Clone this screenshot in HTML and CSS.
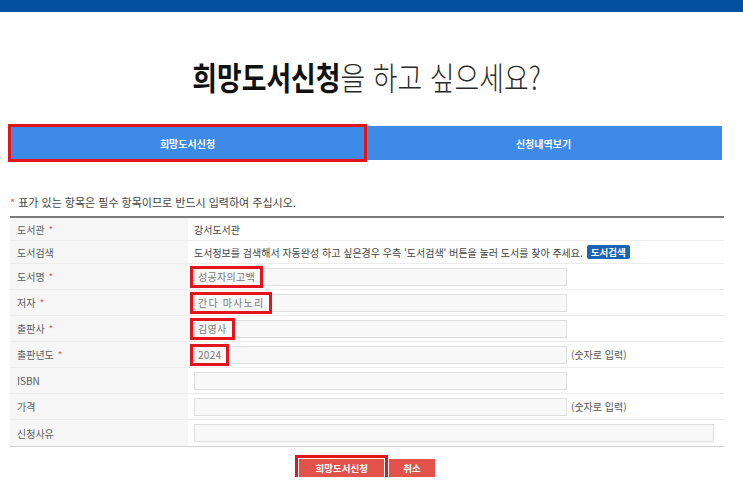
FILE: index.html
```html
<!DOCTYPE html>
<html lang="ko">
<head>
<meta charset="utf-8">
<title>희망도서신청</title>
<link rel="stylesheet" href="styles.css">
</head>
<body>
<div class="topbar"></div>
<div class="wrap">
  <h1 class="title"><span class="title-inner"><b>희망도서신청</b>을 하고 싶으세요?</span></h1>
  <div class="tabs">
    <div class="tab tab-active">희망도서신청</div>
    <div class="tab">신청내역보기</div>
  </div>
  <p class="note"><span class="req">*</span> 표가 있는 항목은 필수 항목이므로 반드시 입력하여 주십시오.</p>
  <div class="form">
    <div class="row row-short">
      <div class="label">도서관 <span class="req">*</span></div>
      <div class="value">강서도서관</div>
    </div>
    <div class="row row-short">
      <div class="label">도서검색</div>
      <div class="value">도서정보를 검색해서 자동완성 하고 싶은경우 우측 '도서검색' 버튼을 눌러 도서를 찾아 주세요. <span class="search-btn">도서검색</span></div>
    </div>
    <div class="row">
      <div class="label">도서명 <span class="req">*</span></div>
      <div class="value"><div class="input"><span class="mark">성공자의고백</span></div></div>
    </div>
    <div class="row">
      <div class="label">저자 <span class="req">*</span></div>
      <div class="value"><div class="input"><span class="mark mark-wide">간다 마사노리</span></div></div>
    </div>
    <div class="row">
      <div class="label">출판사 <span class="req">*</span></div>
      <div class="value"><div class="input"><span class="mark">김영사</span></div></div>
    </div>
    <div class="row">
      <div class="label">출판년도 <span class="req">*</span></div>
      <div class="value"><div class="input"><span class="mark">2024</span></div><span class="hint">(숫자로 입력)</span></div>
    </div>
    <div class="row">
      <div class="label">ISBN</div>
      <div class="value"><div class="input"></div></div>
    </div>
    <div class="row">
      <div class="label">가격</div>
      <div class="value"><div class="input"></div><span class="hint">(숫자로 입력)</span></div>
    </div>
    <div class="row">
      <div class="label">신청사유</div>
      <div class="value"><div class="input input-wide"></div></div>
    </div>
  </div>
  <div class="actions">
    <span class="btn btn-marked">희망도서신청</span>
    <span class="btn">취소</span>
  </div>
</div>
</body>
</html>
```

FILE: styles.css
```css
* { box-sizing: border-box; }
html, body {
  margin: 0;
  padding: 0;
  background: #ffffff;
  font-family: "Noto Sans CJK KR", "Noto Sans", sans-serif;
  color: #444;
}
.topbar {
  height: 12px;
  background: #0450a0;
}
.wrap {
  margin-left: 10px;
  width: 714px;
}
.title {
  margin: 44px 0 0 0;
  height: 40px;
  line-height: 40px;
  font-size: 32px;
  font-weight: 300;
  color: #2a2a2a;
  text-align: center;
  white-space: nowrap;
}
.title-inner {
  display: inline-block;
  transform: scaleX(0.84);
}
.title b {
  font-weight: 700;
  color: #111;
}
.tabs {
  margin-top: 30px;
  width: 712px;
  height: 34px;
  display: flex;
}
.tab {
  flex: 1;
  background: #3e8ae7;
  color: #fff;
  font-size: 10px;
  font-weight: 700;
  display: flex;
  align-items: center;
  justify-content: center;
}
.tab-active {
  flex: 0 0 355px;
  outline: 3px solid #e3141b;
  outline-offset: -1px;
  position: relative;
  z-index: 1;
}
.note {
  margin: 34px 0 0 0;
  height: 16px;
  line-height: 16px;
  font-size: 11px;
  color: #444;
}
.req { color: #e8584f; }
.form {
  margin-top: 6px;
  border-top: 2px solid #7a7a7a;
  border-bottom: 1px solid #cfcfcf;
}
.row {
  display: grid;
  grid-template-columns: 178px 1fr;
  height: 26px;
  border-bottom: 1px solid #ececec;
}
.row:last-child { border-bottom: none; }
.row-short { height: 23px; }
.label {
  background: #f6f6f6;
  padding-left: 7px;
  font-size: 10px;
  color: #5a5a5a;
  display: flex;
  align-items: center;
  gap: 4px;
}
.value {
  padding-left: 6px;
  font-size: 10px;
  color: #444;
  display: flex;
  align-items: center;
  white-space: nowrap;
}
.search-btn {
  display: inline-block;
  margin-left: 4px;
  padding: 0 4px;
  height: 14px;
  line-height: 14px;
  background: #1b63b4;
  color: #fff;
  font-weight: 700;
  font-size: 9.5px;
  border-radius: 2px;
}
.input {
  width: 373px;
  height: 18px;
  border: 1px solid #dedede;
  background: #f8f8f8;
  display: flex;
  align-items: center;
  font-size: 10px;
  color: #777;
}
.input-wide { width: 520px; }
.mark {
  display: inline-block;
  margin-left: -2px;
  height: 16px;
  line-height: 16px;
  padding: 0 5px;
  outline: 3px solid #e3141b;
  letter-spacing: 0.3px;
}
.mark-wide { letter-spacing: 1.2px; }
.hint {
  margin-left: 4px;
  font-size: 10px;
  color: #555;
}
.actions {
  margin-top: 12px;
  display: flex;
  justify-content: center;
  gap: 5px;
}
.btn {
  display: inline-flex;
  align-items: center;
  justify-content: center;
  height: 18px;
  padding: 0 14px;
  background: #e2524b;
  color: #fff;
  font-size: 9.5px;
  font-weight: 700;
}
.btn-marked {
  width: 85px;
  outline: 3px solid #e3141b;
  outline-offset: 1px;
}
```
